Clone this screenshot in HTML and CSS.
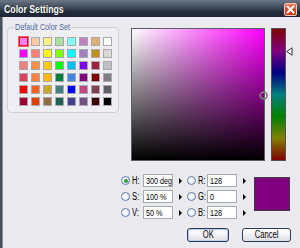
FILE: index.html
```html
<!DOCTYPE html>
<html>
<head>
<meta charset="utf-8">
<link rel="stylesheet" href="styles.css">
</head>
<body>
<div class="window">
  <div class="titlebar">
    <span class="title"><span class="nar">Color Settings</span></span>
    <button class="close" aria-label="Close"><svg width="11" height="11" viewBox="0 0 11 11"><path d="M2.5 2.5 L8.5 8.5 M8.5 2.5 L2.5 8.5" stroke="#fff" stroke-width="2" stroke-linecap="square"/></svg></button>
  </div>
  <div class="body">
    <div class="top">
      <fieldset class="palette">
        <legend><span class="nar">Default Color Set</span></legend>
        <div class="swatches">
          <span class="sw selected" style="background:#ff80ff"></span>
          <span class="sw" style="background:#ffc8a0"></span>
          <span class="sw" style="background:#f8f080"></span>
          <span class="sw" style="background:#a8e0a0"></span>
          <span class="sw" style="background:#80ffff"></span>
          <span class="sw" style="background:#c080c0"></span>
          <span class="sw" style="background:#e0b070"></span>
          <span class="sw" style="background:#ffffff"></span>

          <span class="sw" style="background:#ff00ff"></span>
          <span class="sw" style="background:#ff8070"></span>
          <span class="sw" style="background:#ffff00"></span>
          <span class="sw" style="background:#80ff00"></span>
          <span class="sw" style="background:#00ffff"></span>
          <span class="sw" style="background:#a080c0"></span>
          <span class="sw" style="background:#c09020"></span>
          <span class="sw" style="background:#d8d8d0"></span>

          <span class="sw" style="background:#f08080"></span>
          <span class="sw" style="background:#ff9040"></span>
          <span class="sw" style="background:#ffc800"></span>
          <span class="sw" style="background:#00ff00"></span>
          <span class="sw" style="background:#00c0f0"></span>
          <span class="sw" style="background:#8000ff"></span>
          <span class="sw" style="background:#a02040"></span>
          <span class="sw" style="background:#c0c0c0"></span>

          <span class="sw" style="background:#e04060"></span>
          <span class="sw" style="background:#ff8040"></span>
          <span class="sw" style="background:#ffb800"></span>
          <span class="sw" style="background:#008040"></span>
          <span class="sw" style="background:#4088e0"></span>
          <span class="sw" style="background:#800080"></span>
          <span class="sw" style="background:#800000"></span>
          <span class="sw" style="background:#808080"></span>

          <span class="sw" style="background:#ff0000"></span>
          <span class="sw" style="background:#ff6020"></span>
          <span class="sw" style="background:#c8a828"></span>
          <span class="sw" style="background:#408080"></span>
          <span class="sw" style="background:#0000ff"></span>
          <span class="sw" style="background:#c04880"></span>
          <span class="sw" style="background:#804050"></span>
          <span class="sw" style="background:#606060"></span>

          <span class="sw" style="background:#a00030"></span>
          <span class="sw" style="background:#e04000"></span>
          <span class="sw" style="background:#907040"></span>
          <span class="sw" style="background:#206050"></span>
          <span class="sw" style="background:#404090"></span>
          <span class="sw" style="background:#705080"></span>
          <span class="sw" style="background:#400000"></span>
          <span class="sw" style="background:#000000"></span>
        </div>
      </fieldset>
      <div class="picker">
        <div class="sv">
          <svg class="sv-marker" width="9" height="9" viewBox="0 0 9 9"><circle cx="4.5" cy="4.5" r="3.3" fill="none" stroke="#e8e8e8" stroke-width="1"/><circle cx="4.5" cy="4.5" r="3.6" fill="none" stroke="#6a6a6a" stroke-width="1.4"/></svg>
        </div>
        <div class="hue">
          <svg class="hue-marker" width="7" height="9" viewBox="0 0 7 9"><path d="M0.7 4.5 L6 0.8 L6 8.2 Z" fill="#fff" stroke="#333" stroke-width="1"/></svg>
        </div>
      </div>
    </div>
    <div class="controls">
      <div class="fields">
        <span class="radio checked"></span><span class="lbl"><span class="nar">H:</span></span><span class="box"><span class="nar">300 deg</span></span><span class="arrow"></span>
        <span class="radio"></span><span class="lbl"><span class="nar">R:</span></span><span class="box"><span class="nar">128</span></span><span class="arrow"></span>
        <span class="radio"></span><span class="lbl"><span class="nar">S:</span></span><span class="box"><span class="nar">100 %</span></span><span class="arrow"></span>
        <span class="radio"></span><span class="lbl"><span class="nar">G:</span></span><span class="box"><span class="nar">0</span></span><span class="arrow"></span>
        <span class="radio"></span><span class="lbl"><span class="nar">V:</span></span><span class="box"><span class="nar">50 %</span></span><span class="arrow"></span>
        <span class="radio"></span><span class="lbl"><span class="nar">B:</span></span><span class="box"><span class="nar">128</span></span><span class="arrow"></span>
      </div>
      <div class="preview"></div>
    </div>
    <div class="buttons">
      <button class="btn default"><span class="nar mid">OK</span></button>
      <button class="btn cancel"><span class="nar mid">Cancel</span></button>
    </div>
  </div>
</div>
</body>
</html>
```

FILE: styles.css
```css
* { box-sizing: border-box; }
html, body { margin: 0; padding: 0; }
body {
  width: 300px;
  height: 248px;
  overflow: hidden;
  background: #ebeaef;
  font-family: "Liberation Sans", Arial, sans-serif;
  font-size: 10px;
  color: #000;
}
.nar {
  display: inline-block;
  transform: scaleX(0.76);
  transform-origin: left center;
  white-space: nowrap;
}
.nar.mid { transform-origin: center center; }
.window {
  width: 300px;
  height: 248px;
  display: flex;
  flex-direction: column;
}
.titlebar {
  height: 17px;
  flex: none;
  display: flex;
  align-items: center;
  justify-content: space-between;
  padding: 0 3px 0 4px;
  background: linear-gradient(#6d7886 0%, #3e4a59 45%, #222d3c 70%, #1c2636 100%);
}
.title {
  color: #fff;
  font-weight: bold;
  font-size: 11.5px;
  line-height: 12px;
  text-shadow: 0 0 1px #000;
  margin-top: 1px;
}
.close {
  width: 13px;
  height: 13px;
  margin-top: 2px;
  padding: 0;
  border: 1px solid #f3c8b8;
  border-radius: 2px;
  background: linear-gradient(#f27a58, #d2401c 60%, #c23410);
  display: flex;
  align-items: center;
  justify-content: center;
}
.close svg { display: block; }
.body {
  flex: 1;
  display: flex;
  flex-direction: column;
  border-left: 2px solid #46515e;
  box-shadow: inset 1px 0 0 #8a94a0;
}
.top {
  display: flex;
  align-items: flex-start;
}
.palette {
  margin: 5px 0 0 5px;
  padding: 0 0 6px 0;
  width: 112px;
  border: 1px solid #cfd0da;
  border-radius: 4px;
  background: #efeef3;
  min-width: 0;
}
.palette legend {
  margin-left: 6px;
  padding: 0 1px;
  width: 56px;
  font-size: 9.5px;
  line-height: 10px;
  color: #4a68a4;
  overflow: visible;
}
.swatches {
  margin: 5px 0 0 11px;
  display: grid;
  grid-template-columns: repeat(8, 9px);
  grid-auto-rows: 9px;
  gap: 3px;
}
.sw {
  display: block;
  border: 1px solid #a8a8b0;
}
.sw.selected {
  border-color: #e01020;
  box-shadow: 0 0 0 1px #ff6070;
}
.picker {
  margin: 11px 0 0 12px;
  display: flex;
}
.sv {
  position: relative;
  width: 134px;
  height: 133px;
  border: 1px solid #5c5c64;
  background:
    linear-gradient(to top, #000, rgba(0,0,0,0)),
    linear-gradient(to right, #fff, #ff00ff);
}
.sv-marker {
  position: absolute;
  left: 127px;
  top: 62px;
}
.hue {
  position: relative;
  margin-left: 6px;
  width: 15px;
  height: 133px;
  border: 1px solid #505058;
  background: linear-gradient(#800000, #800080 16.67%, #000080 33.33%, #008080 50%, #008000 66.67%, #808000 83.33%, #800000);
}
.hue-marker {
  position: absolute;
  left: 14px;
  top: 18px;
}
.controls {
  margin: 13px 0 0 119px;
  display: flex;
  align-items: flex-start;
}
.fields {
  display: grid;
  grid-template-columns: 10px 12px 30px 14px 10px 10px 30px 17px;
  grid-auto-rows: 13px;
  row-gap: 3px;
  align-items: center;
}
.radio {
  width: 9px;
  height: 9px;
  border-radius: 50%;
  border: 1px solid #5a7cb0;
  background: radial-gradient(circle at 40% 40%, #fff, #e6e8f0);
  display: flex;
  align-items: center;
  justify-content: center;
}
.radio.checked::after {
  content: "";
  width: 4px;
  height: 4px;
  border-radius: 50%;
  background: #2aa02a;
}
.lbl {
  font-size: 10px;
  line-height: 13px;
  padding-left: 1px;
  white-space: nowrap;
}
.box {
  height: 13px;
  border: 1px solid #a4a9b6;
  background: #fff;
  font-size: 9.5px;
  line-height: 11px;
  padding-left: 2px;
  white-space: nowrap;
  overflow: hidden;
}
.arrow {
  width: 0;
  height: 0;
  margin-left: 6px;
  border-top: 3px solid transparent;
  border-bottom: 3px solid transparent;
  border-left: 3px solid #000;
}
.preview {
  margin: 3px 0 0 0;
  width: 36px;
  height: 34px;
  background: #800080;
  border: 1px solid #3c3c44;
}
.buttons {
  margin: 9px 0 0 0;
  padding-right: 9px;
  display: flex;
  justify-content: flex-end;
  gap: 13px;
}
.btn {
  height: 14px;
  padding: 0;
  border: 1px solid #2c3a58;
  border-radius: 3px;
  background: linear-gradient(#ffffff, #f2f2f6 50%, #dcdce4);
  font-family: "Liberation Sans", Arial, sans-serif;
  font-size: 10px;
  line-height: 12px;
  color: #000;
}
.btn.default {
  width: 42px;
  box-shadow: inset 0 0 0 1px #b8ccec;
}
.btn.cancel {
  width: 49px;
}
```
